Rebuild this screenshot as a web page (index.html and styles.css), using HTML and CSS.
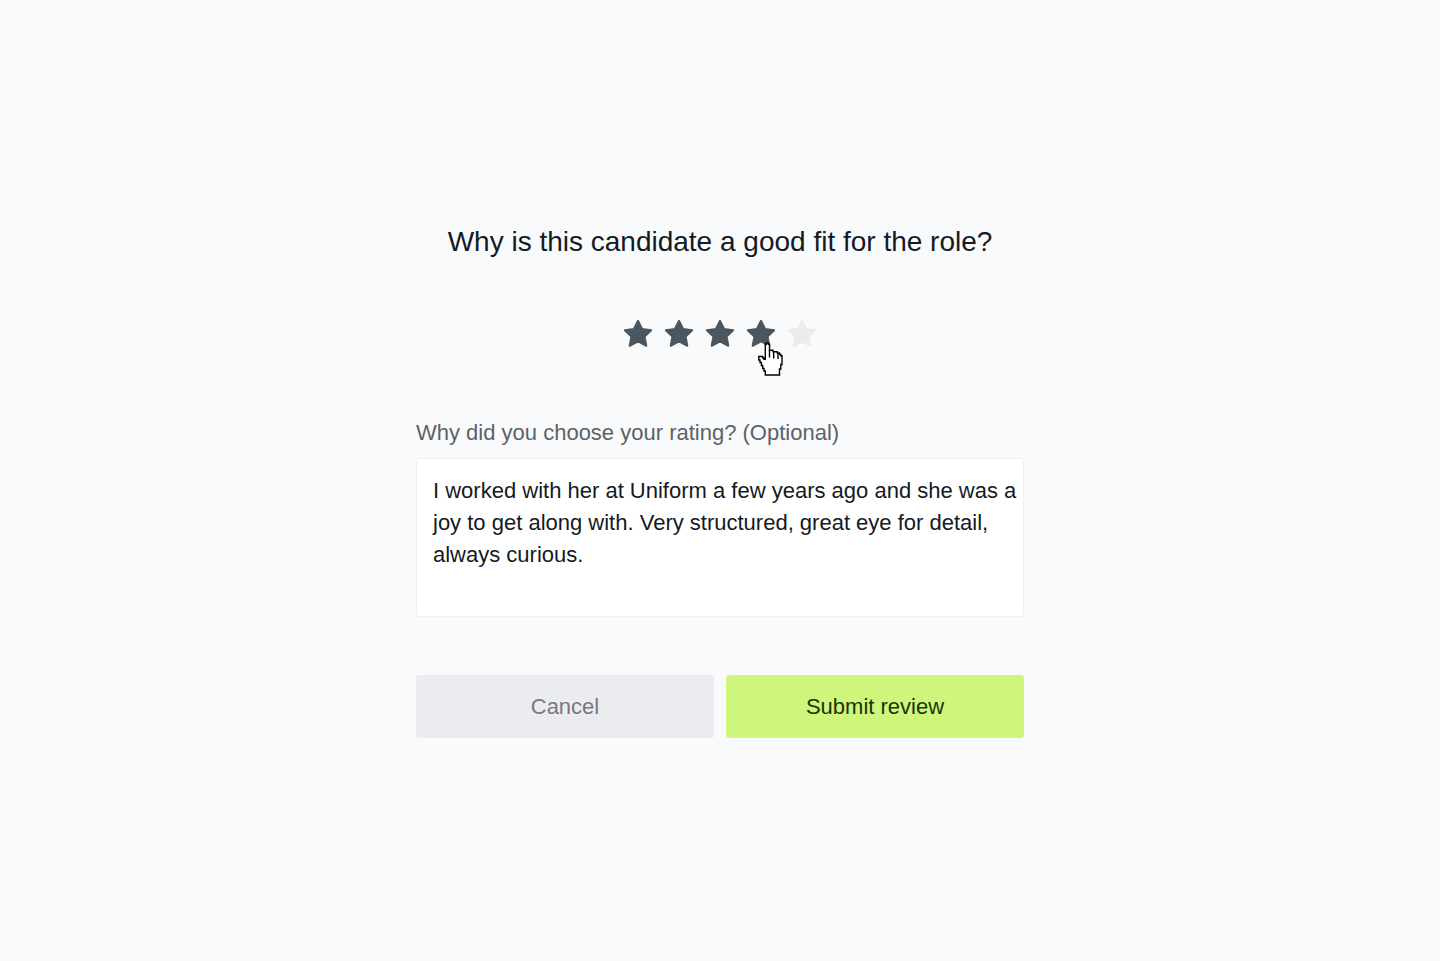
FILE: index.html
```html
<!DOCTYPE html>
<html lang="en">
<head>
<meta charset="utf-8">
<meta name="viewport" content="width=device-width, initial-scale=1">
<title>Candidate review</title>
<link rel="stylesheet" href="styles.css">
</head>
<body>
<svg class="defs" aria-hidden="true">
  <symbol id="star" viewBox="0 0 30 30"><path d="M15 1.800 19.100 9.900 28.200 11.200 21.600 17.600 23.300 26.800 15 22.400 6.700 26.800 8.400 17.600 1.800 11.200 10.900 9.900Z" fill="currentColor" stroke="currentColor" stroke-width="2" stroke-linejoin="round"/></symbol>
</svg>
<main class="page">
  <form class="review">
    <h1 class="title">Why is this candidate a good fit for the role?</h1>
    <div class="rating" role="radiogroup" aria-label="Rating">
      <label class="star"><input type="radio" name="rating" value="1" aria-label="1 star"><svg><use href="#star"/></svg></label>
      <label class="star"><input type="radio" name="rating" value="2" aria-label="2 stars"><svg><use href="#star"/></svg></label>
      <label class="star"><input type="radio" name="rating" value="3" aria-label="3 stars"><svg><use href="#star"/></svg></label>
      <label class="star"><input type="radio" name="rating" value="4" aria-label="4 stars" checked><svg><use href="#star"/></svg>
        <svg class="cursor" viewBox="0 0 26 35" aria-hidden="true"><path d="M7.300 2.300H8.300V1H10.300V2.300H11.500V8.300H15V9.700H19.300V11H21.500V12.400H22.800V13.800H24V22.500H22.800V27H21.500V33H7.300V29H6V26.500H4.700V23.500H3.400V20.500H2V18H.8V14.500H4.700V16H6V17.300H7.300Z" fill="#fff" stroke="#000" stroke-width="1.400"/><path d="M11.500 8V15.500M15.700 9V16.500M20 11V17" fill="none" stroke="#000" stroke-width="1.400"/></svg>
      </label>
      <label class="star"><input type="radio" name="rating" value="5" aria-label="5 stars"><svg><use href="#star"/></svg></label>
    </div>
    <label class="caption" for="reason">Why did you choose your rating? (Optional)</label>
    <textarea class="reason" id="reason" spellcheck="false">I worked with her at Uniform a few years ago and she was a joy to get along with. Very structured, great eye for detail, always curious.</textarea>
    <div class="actions">
      <button class="button cancel" type="button">Cancel</button>
      <button class="button submit" type="submit">Submit review</button>
    </div>
  </form>
</main>
</body>
</html>
```
FILE: styles.css
```css
* { box-sizing: border-box; }
body {
  margin: 0;
  background: #f9fafc;
  color: #141a24;
  font-family: "Liberation Sans", Arial, sans-serif;
  font-size: 22px;
}
.defs { position: absolute; width: 0; height: 0; }
.page {
  min-height: 100vh;
  display: flex;
  align-items: center;
  justify-content: center;
}
.review {
  width: 100%;
  max-width: 608px;
  display: flex;
  flex-direction: column;
}
.title {
  margin: 0 0 58px;
  font-size: 28px;
  line-height: 38px;
  font-weight: 400;
  text-align: center;
}
.rating {
  display: flex;
  justify-content: center;
  gap: 11px;
  margin-bottom: 68px;
}
.star {
  position: relative;
  display: block;
  height: 30px;
  color: #4b565f;
  cursor: pointer;
}
.star svg { display: block; width: 30px; height: 30px; }
.star:has(:checked) ~ .star { color: #ececee; }
.star input {
  position: absolute;
  inset: 0;
  width: 100%;
  height: 100%;
  margin: 0;
  opacity: 0;
}
.star .cursor {
  position: absolute;
  left: 12px;
  top: 23px;
  z-index: 1;
  width: 26px;
  height: 35px;
  pointer-events: none;
}
.caption {
  margin-bottom: 9px;
  line-height: 32px;
  color: #5c6266;
}
.reason {
  display: block;
  width: 100%;
  height: 159px;
  margin: 0 0 58px;
  padding: 16px 4px 16px 16px;
  border: 1px solid #f0f1f3;
  border-radius: 2px;
  background: #fff;
  color: inherit;
  font: inherit;
  line-height: 32px;
  resize: none;
}
.actions {
  display: grid;
  grid-template-columns: 1fr 1fr;
  gap: 12px;
}
.button {
  height: 63px;
  padding: 0 16px;
  border: 0;
  border-radius: 3px;
  font: inherit;
  cursor: pointer;
}
.cancel { background: #ebecf0; color: #77797e; }
.submit { background: #cef67d; color: #1d3305; }
```
